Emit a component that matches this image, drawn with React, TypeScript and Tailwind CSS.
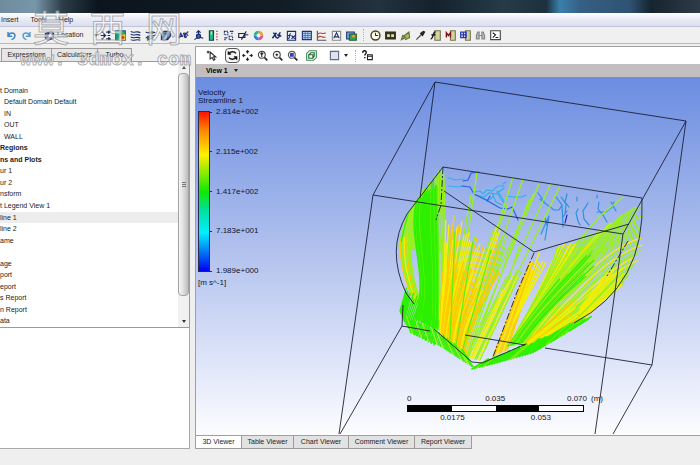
import React from 'react';

const GREEN = '#2df000';
const LIME = '#98f21c';
const YELLOW = '#f6f000';
const ORANGE = '#ffcb00';

type Curve = [number, number, number, number, number, number, number, number];

// stable noise so the streamlines never move between renders
const noise = (n: number) => {
  const v = Math.sin(n * 127.1 + 11.7) * 43758.5453;
  return v - Math.floor(v);
};

// n curves interpolated between the key curves
const streams = (keys: Curve[], n: number, jitter: number, seed: number) =>
  Array.from({ length: n }, (_, i) => {
    const t = (i / (n - 1)) * (keys.length - 1);
    const k = Math.min(Math.floor(t), keys.length - 2);
    const f = t - k;
    const p = keys[k].map((v, j) => v + (keys[k + 1][j] - v) * f);
    const grow = (noise(seed + i) - 0.5) * jitter;
    const dx = p[0] - p[2];
    const dy = p[1] - p[3];
    const len = Math.hypot(dx, dy) || 1;
    p[0] += (dx / len) * grow;
    p[1] += (dy / len) * grow;
    const r = p.map((v) => v.toFixed(1));
    return `M${r[0]} ${r[1]}C${r[2]} ${r[3]} ${r[4]} ${r[5]} ${r[6]} ${r[7]}`;
  });

const line = (x1: number, y1: number, x2: number, y2: number): Curve => [
  x1, y1, x1 + (x2 - x1) / 3, y1 + (y2 - y1) / 3, x1 + ((x2 - x1) * 2) / 3, y1 + ((y2 - y1) * 2) / 3, x2, y2,
];

const Streams = ({ keys, n, jitter = 0, seed = 1, colors, width = 1.5 }: any) => (
  <g fill="none" strokeWidth={width} strokeLinecap="round">
    {streams(keys, n, jitter, seed).map((d, i) => (
      <path key={i} d={d} stroke={colors[Math.floor(noise(seed * 3 + i * 7) * colors.length)]} />
    ))}
  </g>
);

const Scene = () => (
  <svg className="absolute inset-0 h-full w-full" viewBox="196 77 504 358" preserveAspectRatio="xMinYMin slice" aria-label="Velocity streamlines">
    {/* slow streamlines near the inlet */}
    <g fill="none" strokeWidth="1.2" strokeLinecap="round">
      <g stroke="#35aee9">
        <path d="M448 178l8 2 8-1M448 186l10 1 6-1M474 192l6-1 3 3 4-4 5 1 6-5 6 0M476 195l8 2 5-4 7 1 8-6M492 193l4 9 6 3M497 191l3 7 4 5M502 190l-4 2 6 9M503 184l3-2M506 196l8 1 8 0 4-2M484 199l5 1 4-3" />
      </g>
      <g stroke="#2a62e0">
        <path d="M463 181l5-1 3-7 8-1M462 186l8 1 4 7 12 6 14 8 8 1 4-2 6 13M487 201l3-5" />
      </g>
      <g stroke="#2c90e4">
        <path d="M538 193l6 8M540 199l6 5 8 6 5 0 3-5M561 197l5 7-1 10M567 194l-2 8 4 5M556 197l6 8 1 22M567 211l-4 6M577 197v4M578 209l-2 4 2 8 2 4M588 203l-5 8 1 8 5 6M597 195v3M599 202l-1 7 5 6 4 7M597 212h9l6-5M611 202l5 9M614 202l-2 5M549 216l-4 24M549 216l-8 18M545 218l2 7" />
      </g>
      <path d="M567 215l-2 8" stroke="#4020b8" />
    </g>

    {/* long thin streamlines reaching the top face */}
    <g fill="none" stroke={LIME} strokeWidth="1.3">
      <path d="M477 172L452 345M513 177L460 350M523 179L463 353M539 184L468 354M551 183L472 357M560 186L476 358M534 193L466 340M508 203L455 340M529 200L480 330M623 197L600 216L560 262M471 195L447 330M520 245L485 350" />
    </g>

    {/* left lobe */}
    <Streams keys={[[409, 212, 404, 222, 402, 232, 399, 246], [425, 189, 421, 205, 418, 220, 418, 250], [443, 168, 446, 195, 444, 220, 443, 250]]} n={24} jitter={5} seed={4} colors={[LIME, GREEN, LIME]} width={1.4} />
    <Streams keys={[[400, 243, 400, 265, 405, 280, 414, 302], [412, 232, 409, 255, 412, 280, 421, 302]]} n={9} jitter={6} seed={8} colors={[YELLOW, LIME, LIME, ORANGE]} />
    <Streams keys={[[416, 203, 407, 240, 430, 275, 415, 318], [437, 185, 438, 240, 440, 290, 438, 330]]} n={32} jitter={8} seed={12} colors={[GREEN, GREEN, GREEN, '#5cf20a']} width={1.5} />
    <Streams keys={[line(406, 290, 400, 311), line(410, 296, 404, 321), line(425, 300, 412, 333), line(438, 322, 434, 345)]} n={24} jitter={8} seed={15} colors={[GREEN]} width={1.4} />

    {/* centre */}
    <Streams keys={[[441, 236, 442, 270, 441, 300, 440, 332], [458, 228, 452, 270, 448, 310, 446, 342], [482, 240, 468, 280, 455, 310, 454, 346], [508, 238, 490, 290, 478, 320, 468, 358]]} n={36} jitter={30} seed={21} colors={[YELLOW, LIME, YELLOW, ORANGE]} width={1.3} />
    <Streams keys={[[442, 280, 441, 300, 441, 315, 440, 331], [462, 262, 452, 300, 448, 320, 446, 344], [492, 285, 478, 310, 466, 330, 464, 354]]} n={24} jitter={30} seed={26} colors={[ORANGE, ORANGE, YELLOW]} width={1.7} />
    <Streams keys={[line(500, 290, 466, 358), line(522, 270, 480, 360)]} n={9} jitter={30} seed={29} colors={[YELLOW, LIME]} width={1.2} />
    <Streams keys={[line(455, 232, 450, 340), line(491, 250, 462, 352)]} n={3} seed={30} colors={['#5cf20a']} width={1.2} />

    {/* middle wedge */}
    <Streams keys={[line(530, 262, 493, 356), line(534, 270, 507, 350)]} n={8} jitter={16} seed={31} colors={[ORANGE, YELLOW, ORANGE]} width={1.5} />
    <Streams keys={[line(538, 256, 514, 322), line(546, 262, 520, 310)]} n={4} jitter={14} seed={34} colors={[YELLOW]} />

    {/* right fan */}
    <Streams keys={[line(558, 250, 524, 322), line(580, 244, 534, 312)]} n={7} jitter={12} seed={48} colors={[YELLOW]} width={1.6} />
    <Streams keys={[[557, 248, 550, 275, 535, 300, 508, 346], [590, 236, 570, 265, 540, 300, 512, 345], [640, 204, 595, 235, 550, 295, 517, 343], [641, 232, 605, 240, 560, 290, 526, 342], [637, 258, 610, 270, 580, 300, 535, 340], [620, 287, 600, 300, 580, 315, 548, 336], [580, 320, 570, 326, 562, 330, 550, 336]]} n={62} jitter={10} seed={41} colors={[LIME, LIME, YELLOW, LIME]} width={1.2} />
    <Streams keys={[[568, 270, 550, 290, 535, 310, 508, 346], [590, 258, 566, 284, 540, 308, 516, 344], [594, 272, 572, 290, 550, 308, 524, 342]]} n={13} jitter={30} seed={45} colors={[GREEN, '#62f00f', LIME]} width={1.3} />
    <Streams keys={[line(568, 306, 522, 346), line(588, 316, 540, 342)]} n={8} jitter={16} seed={51} colors={[ORANGE, YELLOW]} width={1.7} />
    <Streams keys={[line(612, 268, 580, 308), line(625, 280, 580, 322)]} n={8} jitter={14} seed={54} colors={[YELLOW, YELLOW, LIME]} width={1.6} />

    {/* lower rim */}
    <Streams keys={[line(405, 316, 411, 333), line(434, 329, 440, 346), line(464, 352, 474, 368)]} n={34} jitter={6} seed={61} colors={[GREEN, GREEN, LIME]} width={1.3} />
    <Streams keys={[line(484, 361, 472, 369), line(515, 349, 500, 362), line(552, 335, 532, 353), line(574, 322, 554, 340), line(590, 318, 572, 329)]} n={46} jitter={8} seed={65} colors={[GREEN, GREEN, GREEN, '#74f000']} width={1.7} />

    {/* domain wireframe */}
    <g fill="none" stroke="#1c2038" strokeWidth="0.9">
      <path d="M435 82L686 121L652 365L613 434M435 82L373 195L339 434M373 195L623 234L686 121M623 234L595 434M435 82L420 198M403 305L402 326L340 434M402 326L430 331M465 335L525 345M545 348L652 365" />
      <path d="M443 167L642 198M443 167L407 214Q386 250 406 293L414 304M444 191L534 252L629 224M642 198Q646 285 574 323M434 329L472 362L482 363L526 344" />
      <path d="M443 167L441 205L436 220M534 253L517 292L493 357M628 241L607 276" strokeDasharray="7 2 2 2" />
    </g>
  </svg>
);

const Ico = ({ children }: any) => (
  <svg viewBox="0 0 16 16" className="h-[11px] w-[11px] shrink-0" fill="none" stroke="#1c2d74" strokeWidth="1.6" aria-hidden="true">
    {children}
  </svg>
);

const Tool = ({ label, active, children }: any) => (
  <button
    aria-label={label}
    className={`flex h-[15px] w-[15px] shrink-0 items-center justify-center ${active ? 'rounded-sm border border-[#555] bg-[#f4f4f4]' : ''}`}
  >
    <Ico>{children}</Ico>
  </button>
);

const Sep = () => <span className="mx-1 h-3 w-px shrink-0 border-l border-dotted border-[#b4b4b4]" />;

const Caret = () => <span className="h-0 w-0 shrink-0 border-x-2 border-t-[3px] border-x-transparent border-t-[#222]" />;

const MainToolbar = () => (
  <div className="flex h-[17px] items-center overflow-hidden border-b border-[#b9b9b9] bg-[#f0f0f0] pl-1">
    <Tool label="Undo"><path d="M3 3v6h6M3 9c2-6 10-6 10-1 0 3-2 5-5 6" stroke="#3f86c8" strokeWidth="2.2" /></Tool>
    <Tool label="Redo"><path d="M13 3v6H7M13 9C11 3 3 3 3 8c0 3 2 5 5 6" stroke="#5b9bd0" strokeWidth="2.2" /></Tool>
    <button className="ml-2.5 flex h-[15px] w-[54px] items-center gap-0.5">
      <Ico>
        <path d="M2 5l9-3 3 3v7l-9 3-3-4z" fill="#3c66c4" />
        <circle cx="9" cy="8" r="3.5" fill="#d6e4fa" />
      </Ico>
      <span className="grow text-left">Location</span>
      <Caret />
    </button>
    <Tool label="Vector"><path d="M1 8h6M5 5l3 3-3 3M9 3h4M12 1l3 2-3 2M9 13h4M12 11l3 2-3 2M2 3h3M2 13h3M11 8h4" stroke="#222c50" strokeWidth="1.8" /></Tool>
    <Tool label="Contour">
      <path d="M1 1h14v14H1z" fill="#1da66b" stroke="#175a9c" />
      <path d="M5 15c0-6 4-9 10-9v9z" fill="#f0c62c" stroke="none" />
      <circle cx="11" cy="11" r="2.5" fill="#e03a22" stroke="none" />
    </Tool>
    <Tool label="Streamline"><path d="M1 2c5 4 9-2 14 2M1 6c5 4 9-2 14 2M1 10c5 4 9-2 14 2M1 14c5 3 9-2 14 1" /></Tool>
    <Tool label="Particle Track"><path d="M1 3c5 3 9-2 14 1M1 12c5-6 9-1 14-5M3 15l9-4" /><path d="M8 1l6 3-6 3zM3 8l5 3-5 3z" fill="#38601c" stroke="none" /></Tool>
    <Tool label="Volume Rendering"><path d="M2 6l4-4h9v7l-4 5H2z" fill="#5089bd" /><path d="M2 6h9l4-4M11 6v8" /></Tool>
    <span className="w-[3px]" />
    <Tool label="Text"><path d="M1 12l3-7 3 5M2 10l4-1M8 4l2 7M8 5c4-2 4 2 1 3 4 0 4 3 1 3M15 3c-3-1-3 5 0 5" strokeWidth="1.8" /></Tool>
    <Tool label="Coordinate Frame"><path d="M8 1v9l-6 4M8 10l7 2M5 4l3-3 3 3" /><circle cx="8" cy="9" r="3" fill="#3564a8" /></Tool>
    <Tool label="Legend">
      <path d="M2 1h6v14H2z" fill="#21b59a" stroke="#0b4840" />
      <path d="M4 2h2v5H4z" fill="#e6e14a" stroke="none" />
      <path d="M13 1v14" stroke="#c43232" strokeWidth="2" strokeDasharray="2 2" />
    </Tool>
    <Tool label="Instance Transform"><path d="M2 2h5v5H2zM9 9h5v5H9zM10 2h5M13 1v5M2 14l5-4M3 10v5" strokeDasharray="2 1" /></Tool>
    <Tool label="Clip Plane"><path d="M1 5h9v6H1zM5 14L12 2M11 7h4" stroke="#232348" /></Tool>
    <Tool label="Color Map">
      <g strokeWidth="4">
        <path d="M8 3a5 5 0 0 1 5 5" stroke="#f0a32c" />
        <path d="M13 8a5 5 0 0 1-5 5" stroke="#e04ea0" />
        <path d="M8 13a5 5 0 0 1-5-5" stroke="#3b74e0" />
        <path d="M3 8a5 5 0 0 1 5-5" stroke="#2cb88a" />
      </g>
    </Tool>
    <span className="w-[3px]" />
    <Tool label="Variables"><path d="M2 12L8 4M3 5c4-2 3 8 6 6M9 12c6-2 1-8 5-8M9 7l6 2" strokeWidth="2.2" /></Tool>
    <Tool label="Expressions"><path d="M2 2h12v13H2z" fill="#e9ecfa" /><path d="M7 5c-3 0-1 8-4 8M3 8h4M8 8l5 5M13 8l-5 5" /></Tool>
    <Tool label="Table"><path d="M2 2h13v12H2z" fill="#b9d5f6" /><path d="M2 5h13M2 8h13M2 11h13M6 2v12M10 2v12" stroke="#2f5fae" strokeWidth="1" /></Tool>
    <Tool label="Chart"><path d="M2 1v14h13" stroke="#555" /><path d="M3 6c4-5 6 2 11-2M3 11c4-5 6 2 11-1" stroke="#b04a43" /></Tool>
    <Tool label="Comment"><path d="M2 2h12v13H2z" fill="#fafafa" stroke="#888" /><path d="M4 12L8 4l4 8M5 10h6" /></Tool>
    <Tool label="Figure"><path d="M1 3h11v10H1z" fill="#75aee0" /><path d="M5 6h10v9H5z" fill="#38a05b" stroke="#246330" /><circle cx="11" cy="9" r="2" fill="#e7a62f" stroke="none" /></Tool>
    <Sep />
    <Tool label="Timestep Selector"><circle cx="8" cy="8" r="6.5" stroke="#3f4028" strokeWidth="2" fill="#fffde8" /><path d="M8 4v4h4" stroke="#333" /></Tool>
    <Tool label="Animation"><path d="M1 3h14v10H1z" fill="#34341f" stroke="#26261a" /><path d="M3 6h4v4H3zM9 6h4v4H9z" fill="#e5e2a6" stroke="none" /></Tool>
    <Tool label="Quick Editor"><path d="M2 14l2-6 4 3zM5 9l8-6 1 8-6 3z" fill="#a9bb62" stroke="#5f743c" /></Tool>
    <Tool label="Probe"><path d="M2 14l7-7" stroke="#555" strokeWidth="2" /><path d="M8 5l3 3 3-5-2-1z" fill="#222" stroke="#222" /></Tool>
    <Tool label="Function Calculator"><path d="M7 1h8v14H7z" fill="#d5d3a4" stroke="#77754d" /><path d="M8 3C4 2 5 13 1 13M2 7h6" stroke="#111" strokeWidth="2" /></Tool>
    <Tool label="Macro Calculator"><path d="M8 1h7v14H8z" fill="#d5d3a4" stroke="#77754d" /><path d="M2 11V4l3 4 3-4v7" stroke="#7c1414" strokeWidth="2" /></Tool>
    <Tool label="Mesh Calculator"><path d="M8 1h7v14H8z" fill="#d5d3a4" stroke="#77754d" /><path d="M1 3h8v8H1zM1 7h8M5 3v8" stroke="#2637b8" strokeWidth="1.8" /></Tool>
    <Tool label="Find"><path d="M2 13V8l2-5h2v10zM10 13V3h2l2 5v5zM6 8h4" fill="#b7b7b7" stroke="#858585" /></Tool>
    <Tool label="Command Editor"><path d="M1 1h14v13H1z" fill="#fff" stroke="#444" /><path d="M4 4l4 3-4 4M8 11h4" stroke="#222" /></Tool>
  </div>
);

const ViewToolbar = () => (
  <div className="flex h-[17px] shrink-0 items-center overflow-hidden bg-white pl-2">
    <Tool label="Select"><path d="M1 3h4M3 1v4" stroke="#222" /><path d="M6 3v10l3-2 2 4 2-1-2-4h3z" stroke="#333" /></Tool>
    <span className="w-1.5" />
    <Tool label="Rotate" active><path d="M2 2v4h4M2 6c3-5 9-4 11-1M14 14v-4h-4M14 10c-3 5-9 4-11 1" stroke="#111" strokeWidth="2" /></Tool>
    <Tool label="Pan"><path d="M8 1v4M8 11v4M1 8h4M11 8h4M6 3l2-2 2 2M6 13l2 2 2-2M3 6L1 8l2 2M13 6l2 2-2 2" stroke="#222" /></Tool>
    <Tool label="Zoom"><circle cx="7" cy="7" r="5" stroke="#444" /><path d="M11 11l4 4" stroke="#222" strokeWidth="2.4" /><path d="M7 4v6M5 6l2-2 2 2" stroke="#222" /></Tool>
    <Tool label="Zoom Box"><circle cx="7" cy="7" r="5" stroke="#444" /><path d="M11 11l4 4" stroke="#222" strokeWidth="2.4" /><path d="M7 5v4M5 7h4" stroke="#222" /></Tool>
    <Tool label="Fit View"><circle cx="7" cy="7" r="5" stroke="#555" /><path d="M11 11l4 4" stroke="#222" strokeWidth="2.4" /><path d="M5 5h4v4H5z" fill="#2d48b4" stroke="#2d48b4" /></Tool>
    <span className="w-1" />
    <Tool label="Highlighting"><path d="M1 5l4-4h10v10l-4 4H1z" stroke="#3b8a4c" /><path d="M4 7h6v5H4zM4 7l3-3h5v5l-2 3" stroke="#1f6a35" /></Tool>
    <span className="w-2.5" />
    <button aria-label="Viewport layout" className="flex h-[15px] w-[22px] items-center gap-1">
      <Ico><path d="M2 2h12v12H2z" fill="#dfe3ee" stroke="#63687c" /></Ico>
      <Caret />
    </button>
    <Sep />
    <Tool label="Help on item"><path d="M1 4c0-4 6-4 5 0 0 2-2 2-2 4M4 10v2" stroke="#111" strokeWidth="2" /><path d="M8 7h7v7H8zM8 9h7" stroke="#222" /></Tool>
  </div>
);

const TREE = [
  { text: 't Domain' },
  { text: 'Default Domain Default', indent: true },
  { text: 'IN', indent: true },
  { text: 'OUT', indent: true },
  { text: 'WALL', indent: true },
  { text: 'Regions', bold: true },
  { text: 'ns and Plots', bold: true },
  { text: 'ur 1' },
  { text: 'ur 2' },
  { text: 'nsform' },
  { text: 't Legend View 1' },
  { text: 'line 1', selected: true },
  { text: 'line 2' },
  { text: 'ame' },
  { text: '' },
  { text: 'age' },
  { text: 'port' },
  { text: 'eport' },
  { text: 's Report' },
  { text: 'n Report' },
  { text: 'ata' },
];

const Scrollbar = () => (
  <div className="flex w-[11px] shrink-0 flex-col items-center bg-[#f1f1f1] pt-1">
    <span className="mb-1 h-0 w-0 border-x-2 border-b-[3px] border-x-transparent border-b-[#555]" />
    <div className="flex w-full grow items-center justify-center rounded-sm border border-[#a3a3a3] bg-linear-to-r from-[#f6f6f6] via-[#dedede] to-[#bcbcbc]">
      <span className="h-[5px] w-1 border-y border-[#777]">
        <span className="mt-px block h-px bg-[#777]" />
      </span>
    </div>
    <span className="mt-6 mb-1 h-0 w-0 border-x-2 border-t-[3px] border-x-transparent border-t-[#333]" />
  </div>
);

const Outline = () => (
  <aside className="flex w-[190px] shrink-0 flex-col pt-1">
    <div className="flex h-[13px] shrink-0 pl-px">
      <button className="w-[51px] border border-b-0 border-[#9b9b9b] bg-[#e6e6e6]">Expressions</button>
      <button className="w-[46px] border border-b-0 border-l-0 border-[#9b9b9b] bg-[#e6e6e6]">Calculators</button>
      <button className="w-[34px] border border-b-0 border-l-0 border-[#9b9b9b] bg-[#e6e6e6]">Turbo</button>
    </div>
    <div className="flex h-[267px] shrink-0 border border-l-0 border-[#9b9b9b] bg-white">
      <ul className="grid grow auto-rows-fr pt-[23px]">
        {TREE.map((row, i) => (
          <li
            key={i}
            className={`flex min-h-0 items-center whitespace-nowrap ${row.indent ? 'pl-1' : ''} ${row.bold ? 'font-bold' : ''} ${row.selected ? 'bg-[#ededed]' : ''}`}
          >
            {row.text}
          </li>
        ))}
      </ul>
      <Scrollbar />
    </div>
    <div className="grow border-r border-b border-[#a9a9a9] bg-white" />
  </aside>
);

const ColorLegend = () => (
  <div className="absolute top-3 left-0.5 text-[8px] leading-[8px] text-[#10152e]">
    <div>Velocity</div>
    <div>Streamline 1</div>
    <div className="mt-1.5 flex h-[161px]">
      <div className="w-3 border border-[#2a2a4a] bg-[linear-gradient(#ff1400,#ff8a00_12%,#fff000_27%,#10e800_50%,#00e0a0_62%,#00f0ff_76%,#0000f0)]" />
      <div className="flex flex-col justify-between py-px">
        {['2.814e+002', '2.115e+002', '1.417e+002', '7.183e+001', '1.989e+000'].map((v) => (
          <div key={v} className="flex h-0 items-center gap-1">
            <span className="h-px w-0.5 bg-[#2a2a4a]" />
            {v}
          </div>
        ))}
      </div>
    </div>
    <div className="mt-[7px]">[m s^-1]</div>
  </div>
);

const ScaleBar = () => (
  <div className="absolute bottom-3 left-[211px] flex w-[196px] flex-col text-[8px] leading-[10px] text-[#151515]">
    <div className="flex justify-between">
      <span>0</span>
      <span className="pl-3">0.035</span>
      <span className="flex gap-1">
        <span>0.070</span>
        <span>(m)</span>
      </span>
    </div>
    <div className="mt-px grid h-[7px] w-[177px] grid-cols-4 border border-black bg-white">
      <span className="bg-black" />
      <span />
      <span className="bg-black" />
      <span />
    </div>
    <div className="mt-px flex w-[177px] justify-around">
      <span>0.0175</span>
      <span>0.053</span>
    </div>
  </div>
);

const ViewerTabs = () => (
  <div className="flex h-[14px] shrink-0 border-t border-[#a0a0a0] bg-[#efefef]">
    <button className="w-[45px] border-b border-[#9b9b9b] bg-white">3D Viewer</button>
    <button className="w-[53px] border border-t-0 border-[#9b9b9b] bg-[#e2e2e2]">Table Viewer</button>
    <button className="w-[55px] border border-t-0 border-l-0 border-[#9b9b9b] bg-[#e2e2e2]">Chart Viewer</button>
    <button className="w-[66px] border border-t-0 border-l-0 border-[#9b9b9b] bg-[#e2e2e2]">Comment Viewer</button>
    <button className="w-[57px] border border-t-0 border-l-0 border-[#9b9b9b] bg-[#e2e2e2]">Report Viewer</button>
  </div>
);

const Watermark = () => (
  <div className="pointer-events-none absolute top-1.5 left-0 w-[210px] text-white/60 select-none [-webkit-text-stroke:1px_rgba(150,150,150,0.75)]">
    <div className="flex justify-between pr-[28px] pl-[33px] font-['Noto_Sans_CJK_SC',sans-serif] text-[36px] leading-[40px]">
      <span>莫</span>
      <span>西</span>
      <span>网</span>
    </div>
    <div className="pl-5 font-['Liberation_Mono',monospace] text-[19px] leading-[28px] font-bold">www. 3dmox. com</div>
  </div>
);

const App = () => {
  return (
    <div className="relative flex min-h-screen flex-col overflow-hidden bg-[#efefef] font-['Liberation_Sans',Arial,sans-serif] text-[7px] leading-[10px] text-[#1c1c1c]">
      {/* Title bar */}
      <div className="h-[13px] bg-[linear-gradient(90deg,#6f8c9e,#7896aa_5%,#2c3c48_9%,#0c151d_14%,#111c25_40%,#22323e_54%,#14222d_62%,#263a48_72%,#1d303e_78%,#3a80ac_80%,#365f84_83%,#2e5272_90%,#16242f_93%,#2d3c48)]" />

      {/* Menu bar */}
      <nav className="flex h-[14px] items-center gap-3 border-b border-[#c3c3da] bg-linear-to-b from-white via-[#e8eaf5] to-[#dcdff0] pl-px">
        <button>Insert</button>
        <button>Tools</button>
        <button>Help</button>
      </nav>

      <MainToolbar />

      <div className="mb-4 flex grow gap-[5px]">
        <Outline />
        <main className="mt-0.5 flex min-w-0 grow flex-col border-t border-l border-[#a0a0a0]">
          <ViewToolbar />
          <button className="flex h-[13px] shrink-0 items-center gap-1.5 bg-[#c3bfc1] pl-2.5 font-bold text-black">
            View 1
            <Caret />
          </button>
          <div className="relative grow overflow-hidden bg-linear-to-b from-[#6b8ce0] via-[#b4c3ee] to-[#fdfdff]">
            <Scene />
            <ColorLegend />
            <ScaleBar />
          </div>
          <ViewerTabs />
        </main>
      </div>

      <Watermark />
    </div>
  );
};

export default App;
